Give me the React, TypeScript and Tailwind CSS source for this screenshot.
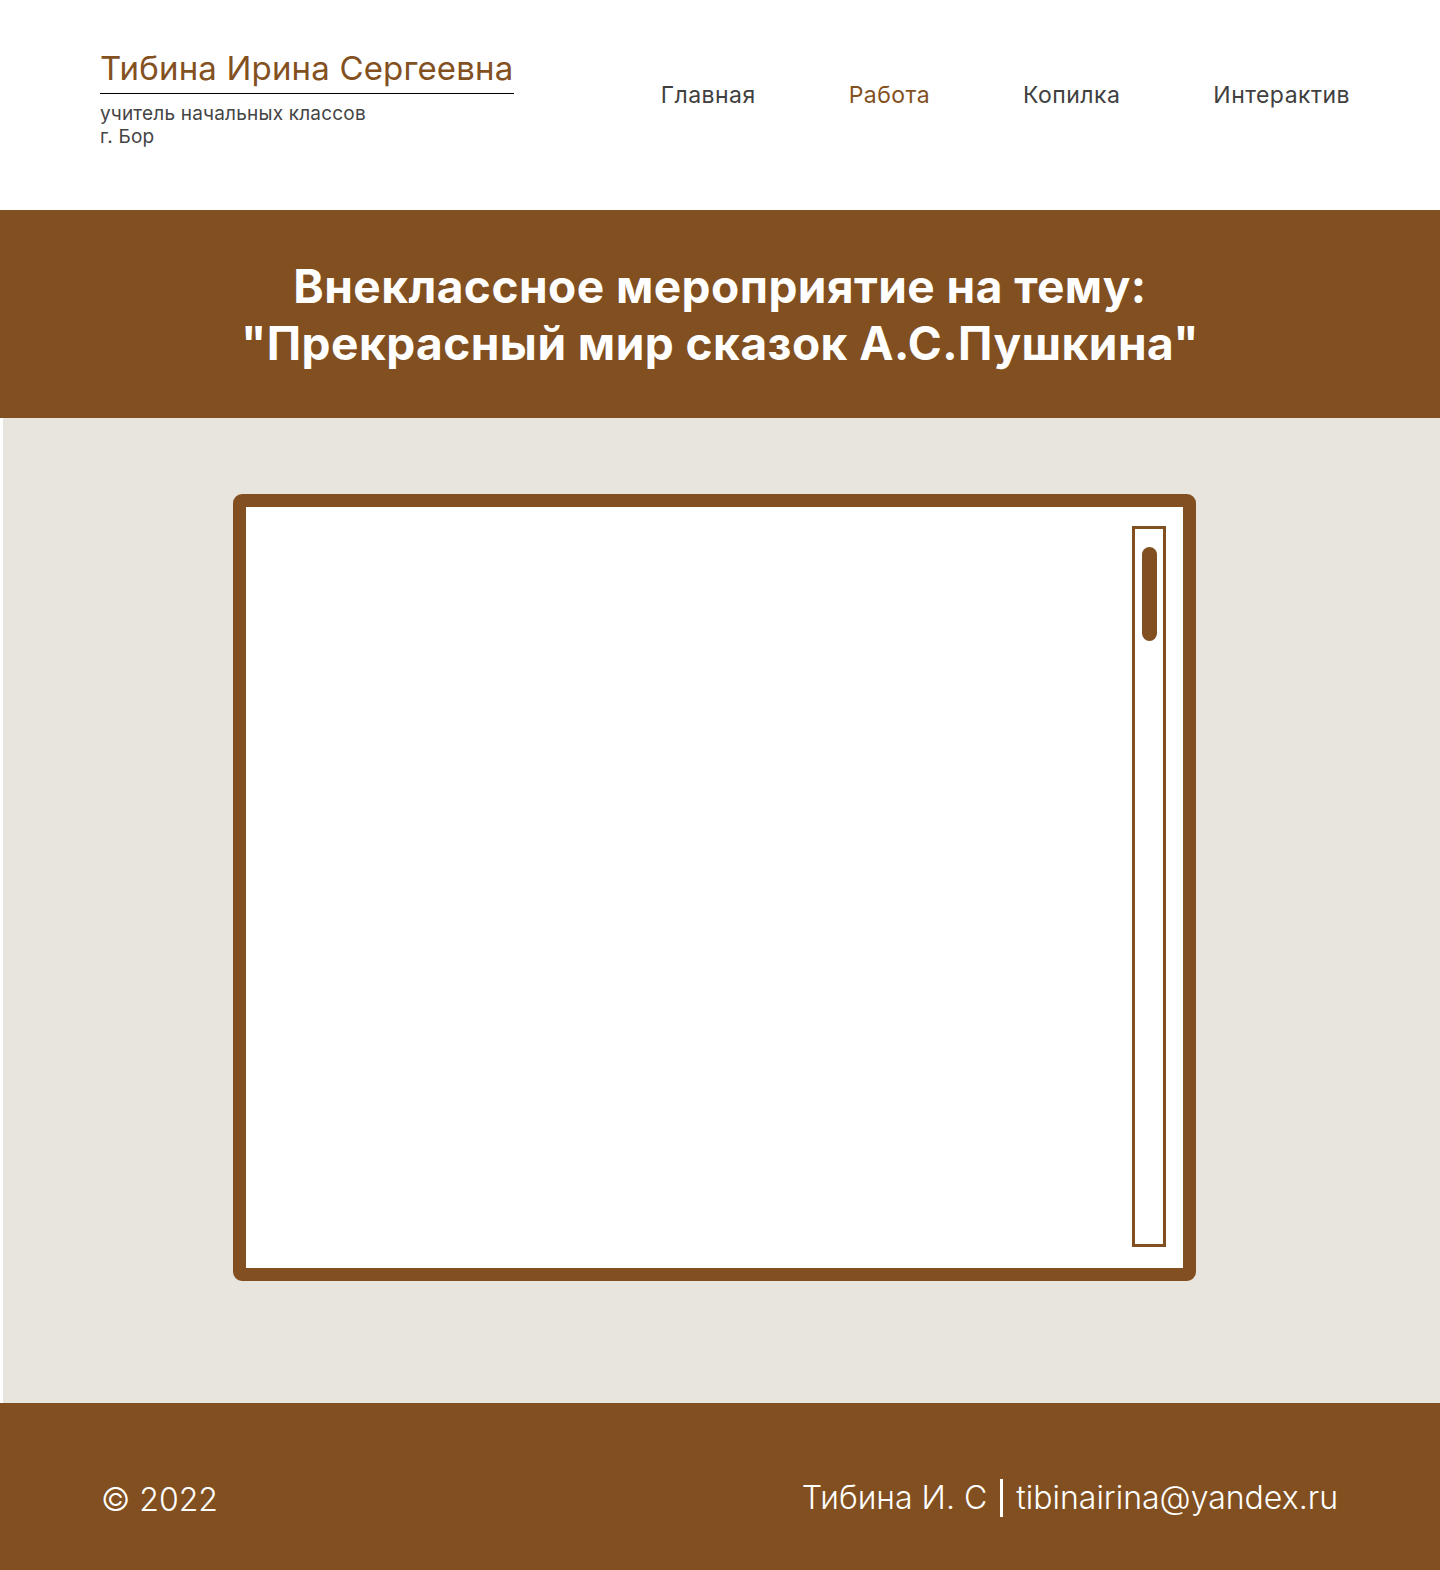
export default function App() {
  return (
    <div className="w-[1440px] min-h-[1570px] bg-white font-['Inter','Noto_Sans',sans-serif]">
      <header className="h-[210px] flex items-start justify-between pl-[100px] pr-[90px] pt-[48px]">
        <div className="w-[414px]">
          <h1 className="whitespace-nowrap text-[33px] tracking-[0.005em] leading-[40px] text-[#83511f] border-b border-black pb-[5px]">Тибина Ирина Сергеевна</h1>
          <p className="text-[19px] tracking-[0.01em] leading-[23px] text-[#444] mt-[8px]">учитель начальных классов<br />г. Бор</p>
        </div>
        <nav className="flex gap-[93px] pt-[31px] text-[23px] tracking-[0.02em] leading-[32px] text-[#404040]">
          <a href="#">Главная</a>
          <a href="#" className="text-[#83511f]">Работа</a>
          <a href="#">Копилка</a>
          <a href="#">Интерактив</a>
        </nav>
      </header>

      <section className="h-[208px] bg-[#825020] flex items-center justify-center">
        <h2 className="text-center text-white font-bold text-[46px] tracking-[0.01em] leading-[57px] pt-[2px]">
          Внеклассное мероприятие на тему:<br />"Прекрасный мир сказок А.С.Пушкина"
        </h2>
      </section>

      <main className="h-[985px] bg-[#e8e5de] ml-[3px] pt-[76px]">
        <div className="ml-[230px] w-[963px] h-[787px] border-[13px] border-[#825020] rounded-[9px] bg-white flex justify-end pt-[19px] pr-[17px] pb-[21px]">
          <div className="w-[34px] h-full border-[3px] border-[#825020] flex justify-center pt-[18px]">
            <div className="w-[15px] h-[94px] rounded-full bg-[#825020]" />
          </div>
        </div>
      </main>

      <footer className="h-[167px] bg-[#825020] flex items-center justify-between pl-[101px] pr-[102px] text-white font-light text-[32px]">
        <span className="pt-[26px]">© 2022</span>
        <span className="flex items-center pt-[22px]">
          Тибина И. С
          <span className="inline-block w-[3px] h-[38px] bg-white mx-[13px]" />
          tibinairina@yandex.ru
        </span>
      </footer>
    </div>
  );
}
